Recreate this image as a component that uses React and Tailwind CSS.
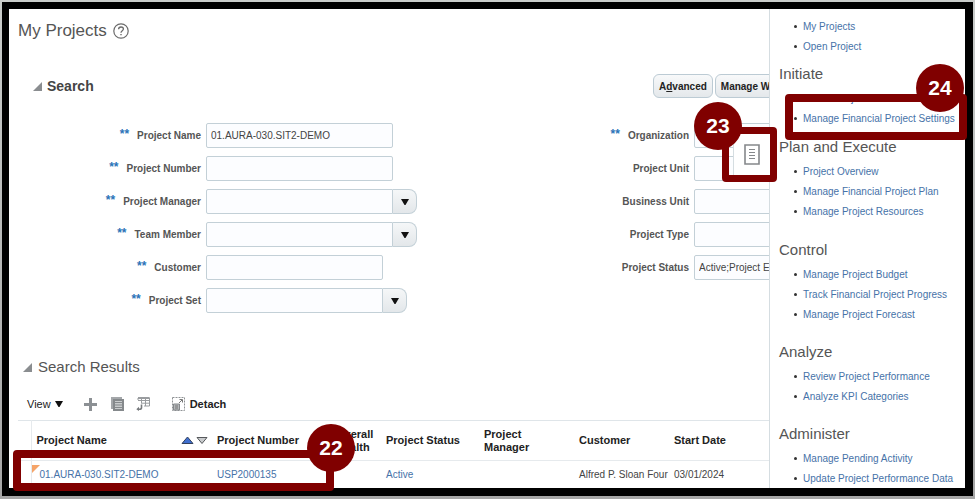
import { useState } from "react";

const leftFields = [
  { id: "project-name", label: "Project Name", value: "01.AURA-030.SIT2-DEMO", width: "w-[187px]" },
  { id: "project-number", label: "Project Number", width: "w-[187px]" },
  { id: "project-manager", label: "Project Manager", width: "w-[187px]", picker: true },
  { id: "team-member", label: "Team Member", width: "w-[187px]", picker: true },
  { id: "customer", label: "Customer", width: "w-[177px]" },
  { id: "project-set", label: "Project Set", width: "w-[177px]", picker: true },
];

const rightFields = [
  { id: "organization", label: "Organization", width: "w-[187px]" },
  { id: "project-unit", label: "Project Unit", width: "w-[187px]", optional: true },
  { id: "business-unit", label: "Business Unit", width: "w-[187px]", optional: true },
  { id: "project-type", label: "Project Type", width: "w-[187px]", optional: true },
  { id: "project-status", label: "Project Status", value: "Active;Project E", width: "w-[187px]", optional: true },
];

const taskGroups = [
  { links: ["My Projects", "Open Project"], spacing: "" },
  { title: "Initiate", links: ["Create Project", "Manage Financial Project Settings"], spacing: "mt-1" },
  {
    title: "Plan and Execute",
    links: ["Project Overview", "Manage Financial Project Plan", "Manage Project Resources"],
    spacing: "mt-[5px]",
  },
  {
    title: "Control",
    links: ["Manage Project Budget", "Track Financial Project Progress", "Manage Project Forecast"],
    spacing: "mt-[15px]",
  },
  { title: "Analyze", links: ["Review Project Performance", "Analyze KPI Categories"], spacing: "mt-3.5" },
  { title: "Administer", links: ["Manage Pending Activity", "Update Project Performance Data"], spacing: "mt-3.5" },
];

function HelpIcon() {
  return (
    <svg width="16" height="16" viewBox="0 0 16 16" fill="none" stroke="#6b6b6b" aria-hidden="true">
      <circle cx="8" cy="8" r="7.2" strokeWidth="1.2" />
      <path d="M5.6 6.3C5.6 4.8 6.6 4 8 4s2.4.9 2.4 2.1C10.4 7.700 8 7.800 8 9.700" strokeWidth="1.3" />
      <path d="M8 10.900v1.400" strokeWidth="1.4" />
    </svg>
  );
}

function Disclosure() {
  return (
    <svg width="9" height="9" viewBox="0 0 9 9" aria-hidden="true">
      <path d="M9 0v9H0z" fill="#8a8d90" />
    </svg>
  );
}

function DownArrow() {
  return (
    <svg width="8" height="6" viewBox="0 0 8 6" aria-hidden="true">
      <path d="M0 0h8L4.500 6h-1z" fill="#111" />
    </svg>
  );
}

function AddIcon() {
  return (
    <svg width="13" height="13" viewBox="0 0 13 13" aria-hidden="true">
      <path d="M5 0h3v5h5v3H8v5H5V8H0V5h5z" fill="#8c9094" />
    </svg>
  );
}

function DuplicateIcon() {
  return (
    <svg width="13" height="14" viewBox="0 0 13 14" aria-hidden="true">
      <path d="M0 0h11v2H2v10H0z" fill="#a4a7aa" />
      <path d="M2 2h11v12H2z" fill="#85898c" />
      <path d="M4 4h7v8H4z" fill="#c9cccd" />
      <path d="M4 5.500h7M4 8h7M4 10.500h7" stroke="#85898c" />
    </svg>
  );
}

function ExportIcon() {
  return (
    <svg width="14" height="14" viewBox="0 0 14 14" fill="none" stroke="#999c9f" aria-hidden="true">
      <path d="M2 3V1h11.500v8H8M2 3.500h11.500M5.500 1v5.500M9.500 1v8M5.500 6.200h8" />
      <path d="M2 1h11.500" strokeWidth="2" />
      <path d="M5.500 7.500v3.200c0 1-.8 1.500-2 1.500H2" stroke="#777a7d" strokeWidth="1.600" />
      <path d="M3 9.700L.3 12.200 3 14z" fill="#777a7d" stroke="none" />
    </svg>
  );
}

function DetachIcon() {
  return (
    <svg width="13" height="14" viewBox="0 0 13 14" fill="none" aria-hidden="true">
      <path d="M.5.500h12v13H.5z" stroke="#8f9295" strokeDasharray="2 1" />
      <path d="M1.500 7h6v6h-6z" fill="#b5b8ba" stroke="#85888b" />
      <path d="M3 9h3M3 11h3" stroke="#777" />
      <path d="M7 6l3-3M7.500 2.500h3v3" stroke="#777" />
    </svg>
  );
}

function TasksIcon() {
  return (
    <svg width="16" height="21" viewBox="0 0 16 21" fill="none" stroke="#85888b" aria-hidden="true">
      <path d="M1 1h14v19H1z" strokeWidth="1.600" />
      <path d="M5 5.500h6M5 8.500h6M5 11.500h6M5 14.500h6" strokeWidth="1.200" />
    </svg>
  );
}

function SortIcons() {
  return (
    <svg width="27" height="9" viewBox="0 0 27 9" strokeWidth="1" aria-hidden="true">
      <path d="M1 7.500L6.500 1 12 7.500z" fill="#3f6fd0" stroke="#33415e" />
      <path d="M16 1.500h10L21 7.500z" fill="#c9cbcd" stroke="#55585b" />
    </svg>
  );
}

function Field({ id, label, value = "", width, labelWidth, picker, optional }) {
  const [text, setText] = useState(value);

  return (
    <div className="flex h-[25px] items-center">
      <label htmlFor={id} className={`${labelWidth} mr-[5px] shrink-0 text-right text-[10px] font-bold text-[#555]`}>
        {!optional && <span className="mr-2 align-top text-xs leading-3 text-[#2a73b8]">**</span>}
        {label}
      </label>
      <input
        id={id}
        type="text"
        value={text}
        onChange={(e) => setText(e.target.value)}
        className={`${width} h-[25px] shrink-0 border border-[#c3d0d7] bg-[#fcfdff] px-1 text-[10px] text-[#444] outline-none ${picker ? "rounded-l-xs" : "rounded-xs"}`}
      />
      {picker && (
        <button
          type="button"
          aria-label={`Search ${label}`}
          className="flex h-[25px] w-6 shrink-0 items-center justify-center rounded-r-lg border border-l-0 border-[#c3d0d7] bg-linear-to-b from-[#f5f7f8] to-[#e3e7ea]"
        >
          <DownArrow />
        </button>
      )}
    </div>
  );
}

function ActionButton({ children }) {
  return (
    <button
      type="button"
      className="h-6 rounded-md border border-[#bccbd4] bg-linear-to-b from-[#f8f9fa] to-[#e4e8eb] px-[5px] text-[10px] font-bold whitespace-nowrap text-[#222]"
    >
      {children}
    </button>
  );
}

function SearchForm() {
  return (
    <form className="mt-[25px] flex" onSubmit={(e) => e.preventDefault()}>
      <div className="flex w-[536px] shrink-0 flex-col gap-2">
        {leftFields.map((field) => (
          <Field key={field.id} labelWidth="w-48" {...field} />
        ))}
      </div>
      <div className="flex flex-col gap-2">
        {rightFields.map((field) => (
          <Field key={field.id} labelWidth="w-36" {...field} />
        ))}
      </div>
    </form>
  );
}

function ResultsToolbar() {
  return (
    <div className="mt-[15px] flex h-5 items-center pl-[18px] text-[11px] text-[#222]">
      <button type="button" className="flex items-center gap-1">
        View
        <DownArrow />
      </button>
      <button type="button" aria-label="Add" className="ml-[21px]">
        <AddIcon />
      </button>
      <button type="button" aria-label="Duplicate" className="ml-3.5">
        <DuplicateIcon />
      </button>
      <button type="button" aria-label="Export" className="ml-3">
        <ExportIcon />
      </button>
      <button type="button" className="ml-[22px] flex items-center gap-[5px] font-bold">
        <DetachIcon />
        Detach
      </button>
    </div>
  );
}

function ResultsTable() {
  return (
    <table className="mt-1.5 ml-[9px] w-[751px] table-fixed border-t border-[#dfe5e9] text-left text-[11px] leading-[13px]">
      <colgroup>
        <col className="w-[13px]" />
        <col className="w-[181px]" />
        <col className="w-[119px]" />
        <col className="w-[50px]" />
        <col className="w-[98px]" />
        <col className="w-[95px]" />
        <col className="w-[95px]" />
        <col />
      </colgroup>
      <thead className="text-[#222]">
        <tr className="h-10 border-b border-[#e6eaed]">
          <td className="border-r border-[#e6eaed]" />
          <th className="pl-[5px]">
            <div className="flex items-center justify-between pr-1">
              Project Name
              <SortIcons />
            </div>
          </th>
          <th className="pl-[5px]">Project Number</th>
          <th className="pl-[5px]">
            Overall
            <br />
            Health
          </th>
          <th className="pl-[5px]">Project Status</th>
          <th className="pl-[5px]">
            Project
            <br />
            Manager
          </th>
          <th className="pl-[5px]">Customer</th>
          <th className="pl-[5px]">Start Date</th>
        </tr>
      </thead>
      <tbody>
        <tr className="h-[27px] text-[10px] text-[#444]">
          <td className="border-r border-[#e6eaed]" />
          <td className="relative pl-2">
            <span className="absolute top-1 left-0 border-t-8 border-r-8 border-t-[#f5a469] border-r-transparent" />
            <a href="#project" className="text-[#4672a8]">
              01.AURA-030.SIT2-DEMO
            </a>
          </td>
          <td className="pl-[5px]">
            <a href="#number" className="text-[#4672a8]">
              USP2000135
            </a>
          </td>
          <td />
          <td className="pl-[5px]">
            <a href="#status" className="text-[#4672a8]">
              Active
            </a>
          </td>
          <td />
          <td className="pl-[5px] whitespace-nowrap">Alfred P. Sloan Four</td>
          <td className="pl-[5px]">03/01/2024</td>
        </tr>
      </tbody>
    </table>
  );
}

function TaskPanel() {
  return (
    <aside className="w-[196px] shrink-0 overflow-hidden border-l border-[#d5dde1] bg-white pt-[7px] pl-[9px]">
      {taskGroups.map((group) => (
        <section key={group.links[0]} className={group.spacing}>
          {group.title && <h2 className="h-7 text-[15px] leading-7 text-[#555]">{group.title}</h2>}
          <ul>
            {group.links.map((link) => (
              <li key={link} className="flex h-5 items-center gap-1.5 pl-[15px] text-[10px] whitespace-nowrap">
                <span className="size-[3px] rounded-full bg-[#333]" />
                <a href="#task" className="text-[#4672a8]">
                  {link}
                </a>
              </li>
            ))}
          </ul>
        </section>
      ))}
    </aside>
  );
}

function StepNumber({ className, children }) {
  return (
    <span
      className={`absolute flex size-12 items-center justify-center rounded-full bg-[#800000] font-['Liberation_Sans',Arial,sans-serif] text-[21px] font-bold text-white ${className}`}
    >
      {children}
    </span>
  );
}

export default function App() {
  return (
    <div className="relative flex min-h-screen overflow-hidden bg-linear-to-b from-[#c9ccca] to-[#a5a5a5] pt-0.5 pr-0.5 pb-[3px] pl-0.5 font-['Liberation_Sans',Arial,sans-serif]">
      <div className="flex min-w-0 flex-1 border-8 border-t-[7px] border-l-[7px] border-black bg-white">
        <main className="min-w-0 flex-1 overflow-hidden pt-2.5">
          <div className="flex h-6 items-center gap-1.5 pl-[9px]">
            <h1 className="text-[17px] text-[#555]">My Projects</h1>
            <button type="button" aria-label="Help">
              <HelpIcon />
            </button>
          </div>

          <div className="mt-[31px] flex h-6 items-center">
            <div className="flex w-[644px] shrink-0 items-center gap-[5px] pl-6">
              <Disclosure />
              <h2 className="text-sm font-bold text-[#444]">Search</h2>
            </div>
            <div className="flex gap-0.5">
              <ActionButton>
                A<u>d</u>vanced
              </ActionButton>
              <ActionButton>Manage Watchlist</ActionButton>
            </div>
          </div>
          <SearchForm />

          <div className="mt-[42px] flex h-6 items-center gap-1.5 pl-3.5">
            <Disclosure />
            <h2 className="text-[15px] text-[#555]">Search Results</h2>
          </div>
          <ResultsToolbar />
          <ResultsTable />
        </main>
        <TaskPanel />
      </div>

      {/* Tab that opens the task panel, ringed as step 23 */}
      <button
        type="button"
        aria-label="Tasks"
        className="absolute top-[127px] right-[198px] flex h-[55px] w-[55px] items-center justify-center rounded-sm border-[7px] border-[#800000]"
      >
        <span className="flex h-full w-full items-center justify-center pl-1">
          <span className="flex h-full w-full items-center justify-center border-l border-[#d5dde1] bg-white">
            <TasksIcon />
          </span>
        </span>
      </button>
      <StepNumber className="top-[102px] right-[233px]">23</StepNumber>

      <div className="pointer-events-none absolute top-[94px] right-2 h-[46px] w-[182px] rounded-sm border-8 border-[#800000]" />
      <StepNumber className="top-16 right-[11px]">24</StepNumber>

      <div className="pointer-events-none absolute top-[450px] left-[13px] h-[41px] w-[321px] rounded-sm border-8 border-[#800000]" />
      <StepNumber className="top-[424px] left-[307px]">22</StepNumber>
    </div>
  );
}
